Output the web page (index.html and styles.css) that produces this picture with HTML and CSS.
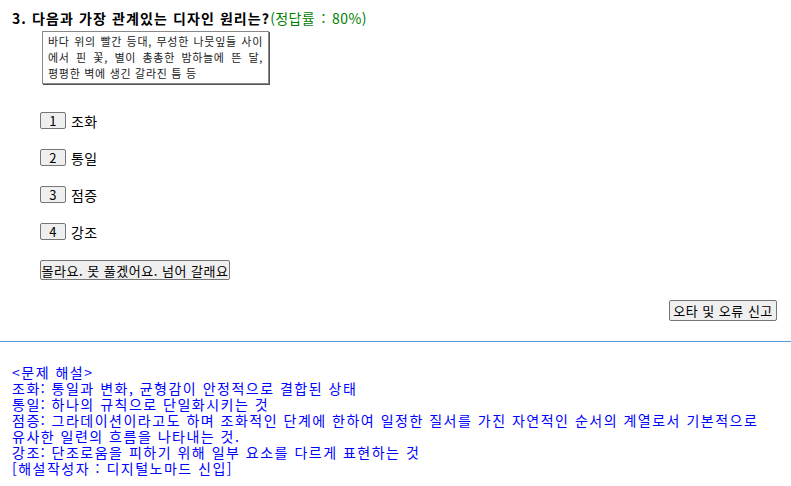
FILE: index.html
```html
<!DOCTYPE html>
<html lang="ko">
<head>
    <meta charset="UTF-8">
    <title>디자인 원리 문제</title>
    <link rel="stylesheet" href="styles.css">
</head>
<body>
    <div class="quiz">
        <div class="title">
            <b>3. 다음과 가장 관계있는 디자인 원리는?</b><span class="rate">(정답률 : 80%)</span>
        </div>
        <div class="example">
            <div class="line">바다 위의 빨간 등대, 무성한 나뭇잎들 사이</div>
            <div class="line">에서 핀 꽃, 별이 총총한 밤하늘에 뜬 달,</div>
            <div>평평한 벽에 생긴 갈라진 틈 등</div>
        </div>

        <ul class="options">
            <li><button class="num">1</button>조화</li>
            <li><button class="num">2</button>통일</li>
            <li><button class="num">3</button>점증</li>
            <li><button class="num">4</button>강조</li>
        </ul>
        <button class="skip">몰라요. 못 풀겠어요. 넘어 갈래요</button>

        <div class="report-row">
            <button class="report">오타 및 오류 신고</button>
        </div>
    </div>

    <hr class="divider">

    <div class="explain">
        &lt;문제 해설&gt;<br>
        조화: 통일과 변화, 균형감이 안정적으로 결합된 상태<br>
        통일: 하나의 규칙으로 단일화시키는 것<br>
        점증: 그라데이션이라고도 하며 조화적인 단계에 한하여 일정한 질서를 가진 자연적인 순서의 계열로서 기본적으로<br>
        유사한 일련의 흐름을 나타내는 것.<br>
        강조: 단조로움을 피하기 위해 일부 요소를 다르게 표현하는 것<br>
        [해설작성자 : 디지털노마드 신입]
    </div>
</body>
</html>
```

FILE: styles.css
```css
body {
    margin: 0;
    font-family: "Noto Sans CJK KR", "Noto Sans", sans-serif;
    color: #000;
    background-color: #fff;
}
.quiz {
    padding: 8px 14px 0 12px;
}
.title {
    font-size: 14px;
    line-height: 20px;
    letter-spacing: 1.1px;
}
.rate {
    color: #008000;
    letter-spacing: 0.4px;
    word-spacing: 2px;
}
.example {
    width: 215px;
    margin: 3px 0 0 30px;
    padding: 1px 5px 2px 5px;
    border: 1px solid #888;
    box-shadow: 1px 1px 0 #555;
    font-size: 11px;
    line-height: 16px;
    letter-spacing: 0.7px;
    color: #222;
}
.example .line {
    text-align: justify;
    text-align-last: justify;
}
.options {
    list-style: none;
    margin: 28px 0 0 28px;
    padding: 0;
}
.options li {
    height: 17px;
    margin-bottom: 20px;
    display: flex;
    align-items: center;
    font-size: 14px;
    letter-spacing: 0.3px;
}
button {
    font-family: "Noto Sans CJK KR", "Noto Sans", sans-serif;
    font-size: 13px;
    line-height: 15px;
    letter-spacing: 0.5px;
    white-space: nowrap;
    background-color: #efefef;
    border: 1px solid #767676;
    border-radius: 2px;
    padding: 0;
    color: #000;
}
.num {
    width: 26px;
    height: 17px;
    margin-right: 5px;
}
.skip {
    display: block;
    margin: 1px 0 0 28px;
    width: 190px;
    height: 20px;
}
.report-row {
    display: flex;
    justify-content: flex-end;
    margin-top: 20px;
}
.report {
    height: 21px;
    width: 108px;
}
.divider {
    margin: 20px 0 0 0;
    border: none;
    border-top: 1px solid #5b9bd5;
}
.explain {
    padding: 22px 12px 0 12px;
    font-size: 14px;
    line-height: 16px;
    letter-spacing: 1.5px;
    color: #0000ff;
}
```
